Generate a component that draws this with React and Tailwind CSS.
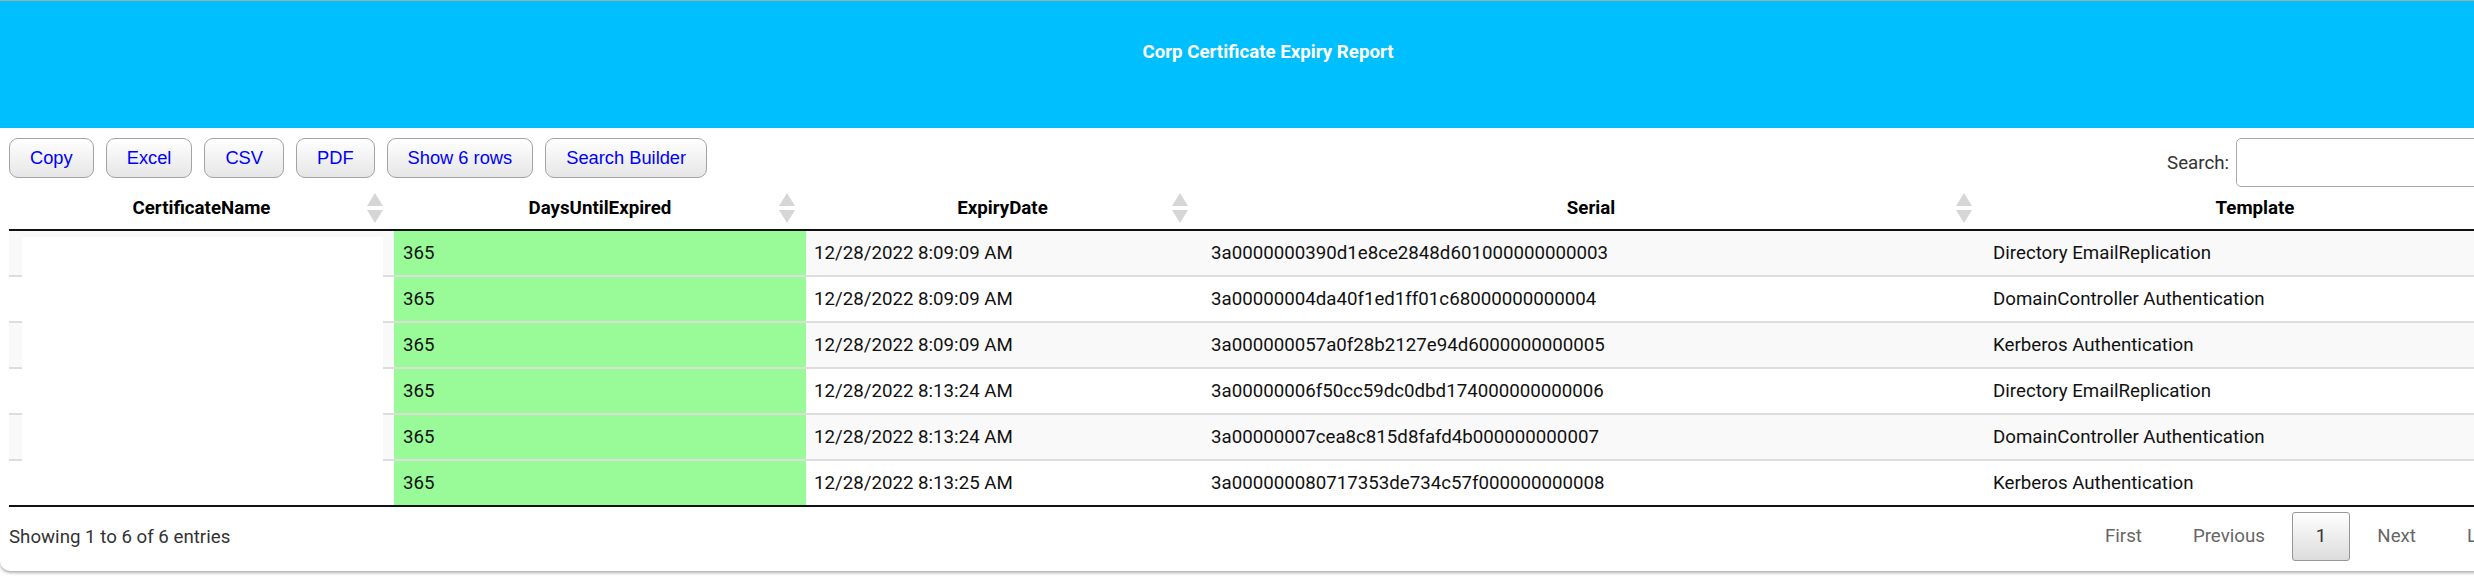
import React from "react";

const rows = [
  { days: "365", expiry: "12/28/2022 8:09:09 AM", serial: "3a0000000390d1e8ce2848d601000000000003", template: "Directory EmailReplication" },
  { days: "365", expiry: "12/28/2022 8:09:09 AM", serial: "3a00000004da40f1ed1ff01c68000000000004", template: "DomainController Authentication" },
  { days: "365", expiry: "12/28/2022 8:09:09 AM", serial: "3a000000057a0f28b2127e94d6000000000005", template: "Kerberos Authentication" },
  { days: "365", expiry: "12/28/2022 8:13:24 AM", serial: "3a00000006f50cc59dc0dbd174000000000006", template: "Directory EmailReplication" },
  { days: "365", expiry: "12/28/2022 8:13:24 AM", serial: "3a00000007cea8c815d8fafd4b000000000007", template: "DomainController Authentication" },
  { days: "365", expiry: "12/28/2022 8:13:25 AM", serial: "3a000000080717353de734c57f000000000008", template: "Kerberos Authentication" },
];

const columns = ["CertificateName", "DaysUntilExpired", "ExpiryDate", "Serial", "Template"];

const buttons = ["Copy", "Excel", "CSV", "PDF", "Show 6 rows", "Search Builder"];

function SortIcon() {
  return (
    <svg width="16" height="30" viewBox="0 0 16 30" className="absolute right-[11px] top-1/2 -translate-y-1/2">
      <polygon points="0,13 8,0 16,13" fill="#d6d6d6" />
      <polygon points="0,17 8,30 16,17" fill="#d6d6d6" />
    </svg>
  );
}

function App() {
  return (
    <div className="w-[2474px] h-[577px] overflow-hidden bg-white font-[Roboto,sans-serif] text-[18.7px] leading-[22px] text-[#111]">
      <div className="w-[2536px] border-t border-[#a8a8a8] rounded-b-[10px] bg-white shadow-[0_2px_3px_rgba(0,0,0,0.3)]">
        <div className="h-[127px] bg-[#00bfff] pt-[40px] text-center font-bold text-white">
          Corp Certificate Expiry Report
        </div>

        <div className="px-[9px] pt-[10px] flex justify-between items-start">
          <div className="flex gap-[12px]">
            {buttons.map((b) => (
              <button
                key={b}
                className="h-[40px] px-[20px] rounded-[9px] border border-[#a3a3a3] bg-gradient-to-b from-white to-[#e6e6e6] font-['Liberation_Sans',Arial,sans-serif] text-[18.3px] text-[#0000ff]"
              >
                {b}
              </button>
            ))}
          </div>
          <div className="flex items-center gap-[7px] text-[#333]">
            <span>Search:</span>
            <input className="h-[49px] w-[291px] rounded-[5px] border border-[#aaa] bg-white" />
          </div>
        </div>

        <div className="px-[9px]">
          <div className="grid grid-cols-[385px_412px_393px_784px_544px] border-b-2 border-[#111]">
            {columns.map((c) => (
              <div key={c} className="relative h-[42px] flex items-center justify-center font-bold text-black">
                {c}
                <SortIcon />
              </div>
            ))}
          </div>

          {rows.map((r, i) => (
            <div
              key={i}
              className={
                "grid grid-cols-[385px_412px_393px_784px_544px] " +
                (i === 0 ? "h-[44px] " : "h-[46px] border-t-2 border-[#dddddd] ") +
                (i % 2 === 0 ? "bg-[#f9f9f9]" : "bg-white")
              }
            >
              <div className="relative">
                <div
                  className={
                    "absolute left-[13px] right-[11px] bottom-0 bg-white " +
                    (i === 0 ? "top-[6px]" : "top-[-2px]")
                  }
                />
              </div>
              <div className="bg-[#98fb98] flex items-center pl-[9px]">{r.days}</div>
              <div className="flex items-center pl-[8px]">{r.expiry}</div>
              <div className="flex items-center pl-[12px]">{r.serial}</div>
              <div className="flex items-center pl-[10px]">{r.template}</div>
            </div>
          ))}

          <div className="border-t-2 border-[#111] pt-[5px] pb-[10px] flex justify-between items-center">
            <div className="text-[#333]">Showing 1 to 6 of 6 entries</div>
            <div className="flex text-[#666]">
              <span className="ml-[3px] px-[23px] py-[12px] leading-[23px] border border-transparent">First</span>
              <span className="ml-[3px] px-[23px] py-[12px] leading-[23px] border border-transparent">Previous</span>
              <span className="ml-[3px] px-[23px] py-[12px] leading-[23px] border border-[#979797] rounded-[3px] bg-gradient-to-b from-white to-[#dcdcdc] text-[#333]">1</span>
              <span className="ml-[3px] px-[23px] py-[12px] leading-[23px] border border-transparent">Next</span>
              <span className="ml-[3px] px-[23px] py-[12px] leading-[23px] border border-transparent">Last</span>
            </div>
          </div>
        </div>
      </div>
    </div>
  );
}

export default App;
